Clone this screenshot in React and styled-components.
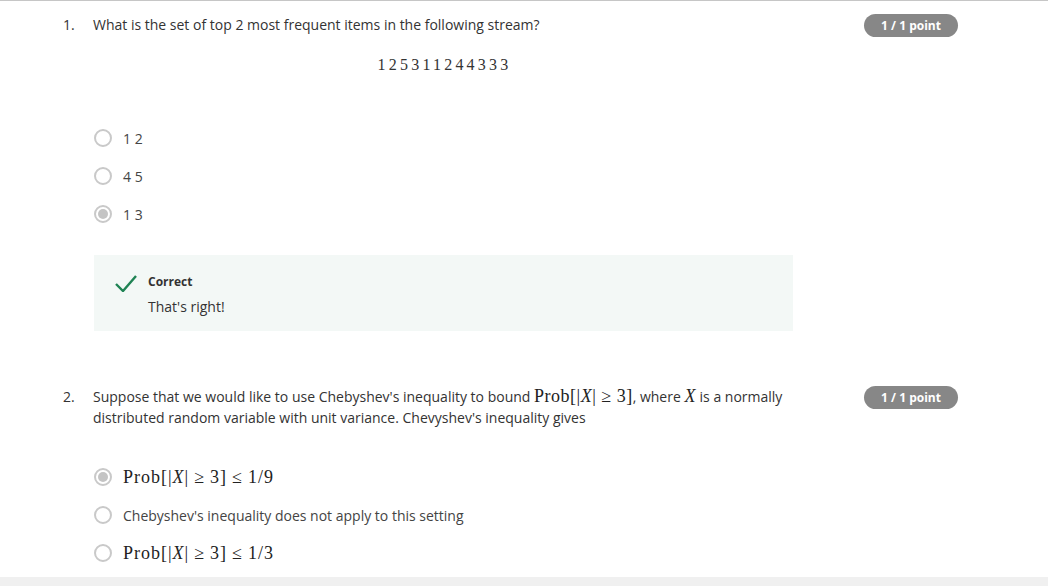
import React from 'react';
import styled, { createGlobalStyle } from 'styled-components';

const GlobalStyle = createGlobalStyle`
  body {
    margin: 0;
    background: #fff;
    font-family: 'Open Sans', 'Noto Sans', sans-serif;
    color: #333;
  }
`;

const Page = styled.div`
  width: 1048px;
  height: 586px;
  border-top: 1px solid #c6c6c6;
  box-sizing: border-box;
  display: flex;
  flex-direction: column;
  overflow: hidden;
`;

const Question = styled.div`
  display: flex;
  padding-left: 63px;
  margin-top: ${({ $top }) => $top}px;
`;

const Number = styled.div`
  width: 30px;
  font-size: 14px;
  line-height: 21px;
  flex-shrink: 0;
`;

const Body = styled.div`
  width: 700px;
  display: flex;
  flex-direction: column;
`;

const Prompt = styled.div`
  font-size: 14px;
  line-height: 21px;
  margin-right: -6px;
`;

const Badge = styled.div`
  margin-left: 71px;
  width: 94px;
  height: 23px;
  border-radius: 12px;
  background: #878787;
  color: #fff;
  font-size: 12px;
  font-weight: 700;
  display: flex;
  align-items: center;
  justify-content: center;
  flex-shrink: 0;
`;

const Stream = styled.div`
  margin-top: 20px;
  text-align: center;
  font-family: 'Liberation Serif', 'DejaVu Serif', serif;
  font-size: 16px;
  line-height: 20px;
  letter-spacing: 3.2px;
  padding-left: 3px;
`;

const Options = styled.div`
  margin-top: ${({ $top }) => $top}px;
  display: flex;
  flex-direction: column;
`;

const Option = styled.label`
  height: 38px;
  display: flex;
  align-items: center;
  gap: 11px;
  padding-left: 1px;
  font-size: 14px;
  color: #444;
`;

const Radio = styled.span`
  width: 18px;
  height: 18px;
  box-sizing: border-box;
  border: 2px solid #c9c9c9;
  border-radius: 50%;
  display: flex;
  align-items: center;
  justify-content: center;
  flex-shrink: 0;
  &::after {
    content: '';
    display: ${({ $checked }) => ($checked ? 'block' : 'none')};
    width: 10px;
    height: 10px;
    border-radius: 50%;
    background: #c4c4c4;
  }
`;

const Math = styled.span`
  font-family: 'Liberation Serif', 'DejaVu Serif', serif;
  font-size: 18px;
  line-height: 1;
  letter-spacing: ${({ $tight }) => ($tight ? 0.5 : 1)}px;
  color: #222;
  white-space: nowrap;
`;

const Var = styled.i`
  font-style: italic;
`;

const Rel = styled.span`
  margin: 0 5px;
`;

const Feedback = styled.div`
  margin-top: 22px;
  margin-left: 1px;
  height: 76px;
  box-sizing: border-box;
  background: #f3f8f6;
  padding: 18px 0 0 21px;
  display: flex;
  gap: 11px;
`;

const Check = styled.svg`
  width: 22px;
  height: 17px;
  margin-top: 2px;
  flex-shrink: 0;
`;

const FeedbackText = styled.div`
  display: flex;
  flex-direction: column;
  gap: 5px;
`;

const FeedbackTitle = styled.div`
  font-size: 12px;
  font-weight: 700;
  line-height: 18px;
  color: #333;
`;

const FeedbackMsg = styled.div`
  font-size: 14px;
  line-height: 21px;
`;

const BottomBand = styled.div`
  margin-top: auto;
  height: 9px;
  background: #f0f0f0;
`;

const Q1 = () => (
  <Question $top={13}>
    <Number>1.</Number>
    <Body>
      <Prompt>What is the set of top 2 most frequent items in the following stream?</Prompt>
      <Stream>125311244333</Stream>
      <Options $top={44}>
        <Option><Radio />1 2</Option>
        <Option><Radio />4 5</Option>
        <Option><Radio $checked />1 3</Option>
      </Options>
      <Feedback>
        <Check viewBox="0 0 22 17">
          <polyline points="1,9 8,16 21,1" fill="none" stroke="#1f8354" strokeWidth="2.4" />
        </Check>
        <FeedbackText>
          <FeedbackTitle>Correct</FeedbackTitle>
          <FeedbackMsg>That's right!</FeedbackMsg>
        </FeedbackText>
      </Feedback>
    </Body>
    <Badge>1 / 1 point</Badge>
  </Question>
);

const Q2 = () => (
  <Question $top={55}>
    <Number>2.</Number>
    <Body>
      <Prompt>
        Suppose that we would like to use Chebyshev's inequality to bound{' '}
        <Math $tight>Prob[|<Var>X</Var>|<Rel>≥</Rel>3]</Math>, where <Math $tight><Var>X</Var></Math> is a
        normally distributed random variable with unit variance. Chevyshev's inequality gives
      </Prompt>
      <Options $top={30}>
        <Option>
          <Radio $checked />
          <Math>
            Prob[|<Var>X</Var>|<Rel>≥</Rel>3]<Rel>≤</Rel>1/9
          </Math>
        </Option>
        <Option><Radio />Chebyshev's inequality does not apply to this setting</Option>
        <Option>
          <Radio />
          <Math>
            Prob[|<Var>X</Var>|<Rel>≥</Rel>3]<Rel>≤</Rel>1/3
          </Math>
        </Option>
      </Options>
    </Body>
    <Badge>1 / 1 point</Badge>
  </Question>
);

const App = () => (
  <>
    <GlobalStyle />
    <Page>
      <Q1 />
      <Q2 />
      <BottomBand />
    </Page>
  </>
);

export default App;
